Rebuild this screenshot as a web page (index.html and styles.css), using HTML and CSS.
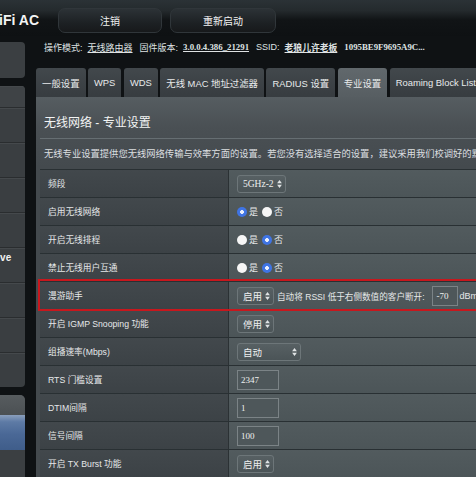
FILE: index.html
```html
<!DOCTYPE html>
<html lang="zh-CN">
<head>
<meta charset="utf-8">
<title>无线网络 - 专业设置</title>
<link rel="stylesheet" href="styles.css">
</head>
<body>
<div class="page">
  <header class="topbar">
    <div class="logo"><span>WiFi AC</span></div>
    <button class="topbtn btn-logout">注销</button>
    <button class="topbtn btn-reboot">重新启动</button>
  </header>
  <div class="body">
    <aside class="sidebar">
      <div class="sb-card"></div>
      <div class="sb-menu">
        <div class="sb-item sb-first"></div>
        <div class="sb-item"></div>
        <div class="sb-item"></div>
        <div class="sb-item"></div>
        <div class="sb-item"></div>
        <div class="sb-item"><span class="sb-text">Adaptive</span></div>
        <div class="sb-item"></div>
        <div class="sb-item"></div>
        <div class="sb-item"></div>
      </div>
      <div class="sb-menu2">
        <div class="sb-head"></div>
        <div class="sb-item sb-active"></div>
        <div class="sb-item"></div>
      </div>
    </aside>
    <main class="main">
      <div class="infoline">
        <span class="k">操作模式:</span>
        <span class="v link">无线路由器</span>
        <span class="k">固件版本:</span>
        <span class="v serif link">3.0.0.4.386_21291</span>
        <span class="k">SSID:</span>
        <span class="v serif link">老狼儿许老板</span>
        <span class="v serif">1095BE9F9695A9C...</span>
      </div>
      <nav class="tabs">
        <div class="tab">一般设置</div>
        <div class="tab">WPS</div>
        <div class="tab">WDS</div>
        <div class="tab">无线 MAC 地址过滤器</div>
        <div class="tab">RADIUS 设置</div>
        <div class="tab active">专业设置</div>
        <div class="tab">Roaming Block List</div>
      </nav>
      <section class="panel">
        <h1 class="title">无线网络 - 专业设置</h1>
        <p class="desc">无线专业设置提供您无线网络传输与效率方面的设置。若您没有选择适合的设置，建议采用我们校调好的默认值。</p>
        <div class="table">
          <div class="row">
            <div class="label">频段</div>
            <div class="value"><span class="select">5GHz-2<svg class="arr" viewBox="0 0 6 10"><path d="M3 0L6 4H0Z M0 6H6L3 10Z"/></svg></span></div>
          </div>
          <div class="row">
            <div class="label">启用无线网络</div>
            <div class="value"><span class="radio on"></span><span class="opt">是</span><span class="radio"></span><span class="opt">否</span></div>
          </div>
          <div class="row">
            <div class="label">开启无线排程</div>
            <div class="value"><span class="radio"></span><span class="opt">是</span><span class="radio on"></span><span class="opt">否</span></div>
          </div>
          <div class="row">
            <div class="label">禁止无线用户互通</div>
            <div class="value"><span class="radio"></span><span class="opt">是</span><span class="radio on"></span><span class="opt">否</span></div>
          </div>
          <div class="row highlight">
            <div class="label">漫游助手</div>
            <div class="value"><span class="select">启用<svg class="arr" viewBox="0 0 6 10"><path d="M3 0L6 4H0Z M0 6H6L3 10Z"/></svg></span><span class="note">自动将 RSSI 低于右侧数值的客户断开:</span><span class="input small">-70</span><span class="unit">dBm</span></div>
          </div>
          <div class="row">
            <div class="label">开启 IGMP Snooping 功能</div>
            <div class="value"><span class="select">停用<svg class="arr" viewBox="0 0 6 10"><path d="M3 0L6 4H0Z M0 6H6L3 10Z"/></svg></span></div>
          </div>
          <div class="row">
            <div class="label">组播速率(Mbps)</div>
            <div class="value"><span class="select wide">自动<svg class="arr" viewBox="0 0 6 10"><path d="M3 0L6 4H0Z M0 6H6L3 10Z"/></svg></span></div>
          </div>
          <div class="row">
            <div class="label">RTS 门槛设置</div>
            <div class="value"><span class="input">2347</span></div>
          </div>
          <div class="row">
            <div class="label">DTIM间隔</div>
            <div class="value"><span class="input">1</span></div>
          </div>
          <div class="row">
            <div class="label">信号间隔</div>
            <div class="value"><span class="input">100</span></div>
          </div>
          <div class="row">
            <div class="label">开启 TX Burst 功能</div>
            <div class="value"><span class="select">启用<svg class="arr" viewBox="0 0 6 10"><path d="M3 0L6 4H0Z M0 6H6L3 10Z"/></svg></span></div>
          </div>
        </div>
      </section>
    </main>
  </div>
</div>
</body>
</html>
```

FILE: styles.css
```css
* { box-sizing: border-box; margin: 0; padding: 0; }

html, body {
  width: 476px;
  height: 477px;
  overflow: hidden;
}

body {
  background: #0f1214;
  font-family: "Liberation Sans", "Noto Sans CJK SC", sans-serif;
  color: #e3e6e7;
}

.page {
  width: 476px;
  height: 477px;
  overflow: hidden;
}

/* ---------- top bar ---------- */
.topbar {
  height: 36px;
  display: flex;
  align-items: flex-start;
  padding-top: 8px;
  background: linear-gradient(180deg, #2b3236 0%, #242a2d 30%, #111416 55%, #0e1113 100%);
}

.logo {
  flex: none;
  width: 39px;
  margin-top: 4px;
  overflow: hidden;
  display: flex;
  justify-content: flex-end;
  white-space: nowrap;
  font-size: 14px;
  line-height: 16px;
  font-weight: bold;
  color: #f3f4f4;
}

.topbtn {
  flex: none;
  height: 25px;
  border: 1px solid #30363a;
  border-radius: 7px;
  background: linear-gradient(180deg, #2c3236 0%, #1d2124 60%, #17191b 100%);
  color: #f2f2f2;
  font-family: inherit;
  font-size: 10px;
}

.btn-logout { width: 104px; margin-left: 19px; }
.btn-reboot { width: 106px; margin-left: 8px; }

/* ---------- body ---------- */
.body {
  display: flex;
  align-items: flex-start;
}

.sidebar {
  flex: none;
  width: 25px;
  overflow: hidden;
}

.sb-card {
  margin-top: 6px;
  height: 36px;
  background: #3b3f42;
  border-radius: 0 4px 4px 0;
}

.sb-menu {
  margin-top: 8px;
  background: #3a3e41;
  border-radius: 0 4px 4px 0;
  overflow: hidden;
}

.sb-item {
  height: 35px;
  border-top: 1px solid #2a2d2f;
  box-shadow: inset 0 1px 0 #45494c;
}

.sb-first {
  height: 21px;
  border-top: none;
  background: #3f4346;
}

.sb-text {
  display: block;
  margin-left: -31px;
  padding-top: 3px;
  font-size: 10px;
  line-height: 13px;
  font-weight: bold;
  color: #f0f0f0;
  white-space: nowrap;
}

.sb-menu2 {
  margin-top: 8px;
  background: #3b3f42;
  border-radius: 0 5px 0 0;
  overflow: hidden;
}

.sb-head {
  height: 20px;
  background: linear-gradient(180deg, #575c5f, #4b5053);
}

.sb-menu2 .sb-item { border-top: none; box-shadow: none; }

.sb-active {
  background: linear-gradient(180deg, #8a9fbd 0%, #5d7aa5 20%, #4a6896 55%, #3f5d8a 100%);
}

/* ---------- main ---------- */
.main {
  flex: none;
  width: 470px;
  margin-left: 11px;
}

.infoline {
  height: 22px;
  display: flex;
  align-items: center;
  padding-left: 8px;
  font-size: 9px;
  white-space: nowrap;
  color: #dfe2e3;
}

.infoline .k { margin-right: 5px; }
.infoline .v { margin-right: 7px; }
.infoline .serif {
  font-family: "Liberation Serif", "Noto Sans CJK SC", serif;
  font-weight: bold;
  font-size: 8.8px;
}
.infoline .link { text-decoration: underline; }

.tabs {
  display: flex;
  gap: 2.5px;
  margin-top: 10px;
  height: 29px;
}

.tab {
  flex: none;
  display: flex;
  align-items: center;
  padding: 0 6px;
  background: linear-gradient(180deg, #42484c 0%, #373c40 100%);
  border-radius: 3px 3px 0 0;
  font-size: 9.4px;
  color: #e8eaeb;
  white-space: nowrap;
}

.tab.active {
  background: linear-gradient(180deg, #61686c 0%, #575e62 100%);
}

.panel {
  height: 380px;
  padding-left: 4px;
  background: linear-gradient(180deg, #565d61 0px, #4a5054 30px, #444a4e 70px);
}

.title {
  padding: 18px 0 7px 4px;
  font-size: 12px;
  line-height: 16px;
  font-weight: normal;
  color: #f3f4f4;
  border-bottom: 1px solid #666e72;
}

.desc {
  margin: 8px 0 8px;
  padding-left: 4px;
  font-size: 9.3px;
  line-height: 14px;
  white-space: nowrap;
  color: #dcdfe0;
}

/* ---------- table ---------- */
.row {
  display: grid;
  grid-template-columns: 189px 1fr;
  height: 28px;
  border-top: 1px solid #293033;
}

.label {
  display: flex;
  align-items: center;
  padding-left: 8px;
  font-size: 8.7px;
  color: #e6e8e9;
  background: linear-gradient(180deg, #42484c 0%, #3c4246 100%);
  border-right: 1px solid #2b3134;
  white-space: nowrap;
}

.value {
  display: flex;
  align-items: center;
  padding-left: 8px;
  font-size: 8.7px;
  color: #e6e8e9;
  background: linear-gradient(180deg, #525b5e 0%, #4c5558 100%);
  white-space: nowrap;
}

.highlight {
  position: relative;
  z-index: 1;
  outline: 2px solid #c8171d;
}

.select {
  display: inline-flex;
  align-items: center;
  justify-content: space-between;
  gap: 3px;
  height: 18px;
  padding: 0 3px 0 5px;
  border: 1px solid #6d7679;
  border-radius: 3px;
  background: linear-gradient(180deg, #576063 0%, #4b5457 100%);
  font-family: "Liberation Serif", "Noto Sans CJK SC", serif;
  font-size: 9.5px;
  color: #eef0f0;
}

.select.wide { width: 64px; }

.arr {
  width: 5px;
  height: 8px;
  fill: #dfe3e4;
}

.radio {
  width: 10px;
  height: 10px;
  border-radius: 50%;
  background: #f6f6f6;
  margin-right: 2px;
}

.radio.on {
  background: radial-gradient(circle, #e8eefc 0 1.6px, #3f74e4 2.2px);
}

.opt { margin-right: 4px; font-size: 9px; }

.note { margin-left: 3px; font-size: 8.6px; }

.input {
  display: flex;
  align-items: center;
  width: 42px;
  height: 20px;
  padding-left: 3px;
  border: 1px solid #7b8386;
  background: #4e575a;
  font-family: "Liberation Serif", serif;
  font-size: 9px;
  color: #eef0f0;
}

.input.small {
  width: 26px;
  padding-left: 4px;
  margin-left: 7px;
}

.unit { margin-left: 2px; font-size: 9px; }
```
